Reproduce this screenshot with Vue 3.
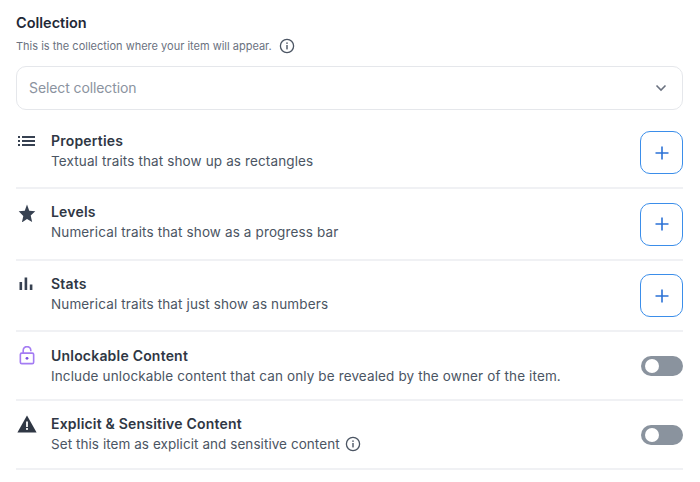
<script setup>
const traits = [
	{ id: 'props', title: 'Properties', text: 'Textual traits that show up as rectangles' },
	{ id: 'levels', title: 'Levels', text: 'Numerical traits that show as a progress bar' },
	{ id: 'stats', title: 'Stats', text: 'Numerical traits that just show as numbers' },
];
</script>

<template>
	<div class="page">
		<h3 class="title">Collection</h3>
		<div class="hint">
			<span>This is the collection where your item will appear.</span>
			<svg class="info" width="16" height="16" viewBox="0 0 16 16" fill="none">
				<circle cx="8" cy="8" r="6.6" stroke="#4b5563" stroke-width="1.3" />
				<rect x="7.3" y="7" width="1.4" height="4.4" fill="#4b5563" />
				<rect x="7.3" y="4.4" width="1.4" height="1.5" fill="#4b5563" />
			</svg>
		</div>
		<div class="select">
			<span class="placeholder">Select collection</span>
			<svg width="12" height="8" viewBox="0 0 12 8" fill="none">
				<path d="M1.5 1.5 6 6l4.5-4.5" stroke="#6b7280" stroke-width="1.6" />
			</svg>
		</div>

		<div class="traits">
			<div v-for="t in traits" :key="t.id" class="row trait">
				<div class="icon">
					<svg v-if="t.id === 'props'" class="list" width="18" height="12" viewBox="0 0 18 12" fill="#374151">
						<rect x="0" y="1" width="2" height="2" />
						<rect x="0" y="5" width="2" height="2" />
						<rect x="0" y="9" width="2" height="2" />
						<rect x="4" y="1" width="13" height="2" />
						<rect x="4" y="5" width="13" height="2" />
						<rect x="4" y="9" width="13" height="2" />
					</svg>
					<svg v-else-if="t.id === 'levels'" class="star" width="18" height="18" viewBox="0 0 20 18" fill="#374151" preserveAspectRatio="none">
						<path d="M10 0.5l2.5 6.2 6.7.5-5.1 4.3 1.6 6.5L10 14.9l-5.7 3.6 1.6-6.5L.8 7.2l6.7-.5z" />
					</svg>
					<svg v-else class="bars" width="14" height="14" viewBox="0 0 14 14" fill="#374151">
						<rect x="0.5" y="5" width="2.6" height="8" />
						<rect x="5.6" y="0.5" width="2.6" height="12.5" />
						<rect x="10.8" y="7.5" width="2.6" height="5.5" />
					</svg>
				</div>
				<div class="body">
					<div class="name">{{ t.title }}</div>
					<div class="desc">{{ t.text }}</div>
				</div>
				<button class="add">
					<svg width="14" height="14" viewBox="0 0 14 14" fill="none">
						<path d="M7 .5v13M.5 7h13" stroke="#2b72d6" stroke-width="1.6" />
					</svg>
				</button>
			</div>
		</div>

		<div class="row toggle-row">
			<div class="icon">
				<svg class="lock" width="16" height="19" viewBox="0 0 16 20" fill="none">
					<rect x="1" y="7.5" width="14" height="11" rx="1.5" stroke="#a47cf3" stroke-width="1.7" />
					<path d="M4 7.5V4.6a4 4 0 0 1 8 0v1" stroke="#a47cf3" stroke-width="1.7" />
					<circle cx="8" cy="13" r="1.5" fill="#7c4fe0" />
				</svg>
			</div>
			<div class="body">
				<div class="name">Unlockable Content</div>
				<div class="desc">Include unlockable content that can only be revealed by the owner of the item.</div>
			</div>
			<div class="switch"><span class="knob"></span></div>
		</div>

		<div class="row toggle-row explicit">
			<div class="icon">
				<svg class="warn" width="20" height="18" viewBox="0 0 20 18">
					<path d="M10 .5 19.6 17.5H.4z" fill="#2f3744" />
					<rect x="9.1" y="6.5" width="1.8" height="5.5" fill="#fff" />
					<rect x="9.1" y="13" width="1.8" height="1.9" fill="#fff" />
				</svg>
			</div>
			<div class="body">
				<div class="name">Explicit &amp; Sensitive Content</div>
				<div class="desc with-info">
					<span class="tight">Set this item as explicit and sensitive content</span>
					<svg width="16" height="16" viewBox="0 0 16 16" fill="none">
						<circle cx="8" cy="8" r="6.6" stroke="#4b5563" stroke-width="1.3" />
						<rect x="7.3" y="7" width="1.4" height="4.4" fill="#4b5563" />
						<rect x="7.3" y="4.4" width="1.4" height="1.5" fill="#4b5563" />
					</svg>
				</div>
			</div>
			<div class="switch"><span class="knob"></span></div>
		</div>
	</div>
</template>

<style>
html,
body {
	background: #fff;
}
</style>

<style scoped>
.page {
	width: 667px;
	padding: 14px 0 0 16px;
	font-family: Inter, "Open Sans", sans-serif;
	color: #374151;
}

.title {
	margin: 0;
	font-size: 14.5px;
	line-height: 18px;
	font-weight: 600;
	color: #1f2937;
}

.hint {
	display: flex;
	align-items: center;
	gap: 7px;
	margin-top: 5px;
	height: 18px;
	font-size: 11px;
	color: #6b7280;
}

.select {
	display: flex;
	align-items: center;
	justify-content: space-between;
	box-sizing: border-box;
	height: 44px;
	margin-top: 11px;
	padding: 0 15px 0 12px;
	border: 1px solid #e5e7eb;
	border-radius: 10px;
	font-size: 14px;
	color: #8b93a0;
}

.placeholder {
	margin-bottom: 2px;
	letter-spacing: -0.1px;
}

.traits {
	margin-top: 7.5px;
}

.row {
	display: flex;
	align-items: flex-start;
	padding-top: 13.2px;
	border-bottom: 2px solid #f0f1f4;
	box-sizing: border-box;
}

.trait {
	height: 71.6px;
}

.toggle-row {
	height: 69px;
	padding-top: 13.5px;
}

.toggle-row.explicit {
	padding-top: 13px;
}

.icon {
	width: 35px;
	height: 20px;
	flex: none;
	display: flex;
	align-items: center;
}

.list {
	margin-left: 2px;
}

.star {
	margin: 1px 0 0 2px;
}

.bars {
	margin: 1px 0 0 3px;
}

.lock {
	margin-left: 3px;
}

.warn {
	margin-left: 1px;
}

.body {
	flex: 1;
}

.name {
	font-size: 14px;
	line-height: 20px;
	font-weight: 600;
	letter-spacing: 0.2px;
	color: #2f3744;
}

.desc {
	font-size: 13.5px;
	line-height: 20px;
	letter-spacing: 0.13px;
	color: #4b5563;
}

.with-info {
	display: flex;
	align-items: center;
	gap: 5px;
}

.tight {
	letter-spacing: 0.06px;
}

.add {
	display: flex;
	align-items: center;
	justify-content: center;
	width: 43px;
	height: 43px;
	margin-top: 0.5px;
	padding: 0;
	background: #fff;
	border: 1px solid #3b8eea;
	border-radius: 10px;
}

.switch {
	width: 42px;
	height: 20px;
	margin-top: 10px;
	padding: 3px 4px;
	box-sizing: border-box;
	background: #8a939e;
	border-radius: 10px;
}

.explicit .switch {
	margin-top: 11px;
}

.knob {
	display: block;
	width: 14px;
	height: 14px;
	background: #fff;
	border-radius: 50%;
}
</style>
